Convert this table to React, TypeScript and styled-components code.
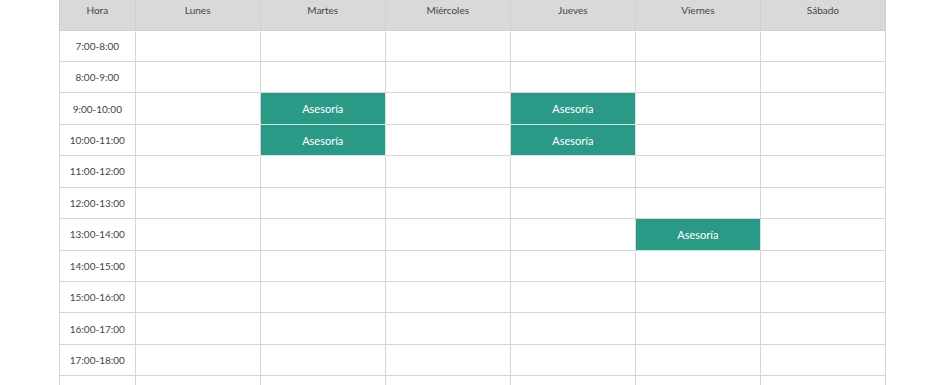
import React from 'react';
import styled, { createGlobalStyle } from 'styled-components';

const GlobalStyle = createGlobalStyle`
    html, body {
        margin: 0;
        padding: 0;
        background: #ffffff;
    }
    body {
        font-family: Lato, "Open Sans", sans-serif;
    }
`

const Page = styled.div`
    padding-left: 59px;
    width: 945px;
    height: 385px;
    overflow: hidden;
    box-sizing: border-box;
`

const Table = styled.table`
    border-collapse: collapse;
    table-layout: fixed;
    width: 827px;
    font-size: 10px;
    color: #444444;
`

const HeadCell = styled.th<{ $first?: boolean }>`
    width: ${(p) => (p.$first ? '75px' : '124px')};
    height: 30px;
    padding: 4px 0 0;
    box-sizing: border-box;
    background-color: #d9d9d9;
    border: 1px solid #d0d0d0;
    border-top: none;
    font-weight: 400;
    line-height: 12px;
    text-align: center;
    vertical-align: top;
`

const Row = styled.tr`
    height: 31.45px;
`

const Cell = styled.td<{ $busy?: boolean }>`
    padding: 0;
    border: 1px solid #d6d6d6;
    text-align: center;
    vertical-align: middle;
    background-color: ${(p) => (p.$busy ? '#2a9a87' : '#ffffff')};
    color: ${(p) => (p.$busy ? '#ffffff' : '#444444')};
    font-size: ${(p) => (p.$busy ? '11px' : '10px')};
    border-color: ${(p) => (p.$busy ? '#cfe6e1' : '#d6d6d6')};
`

const days = ['Lunes', 'Martes', 'Miércoles', 'Jueves', 'Viernes', 'Sábado'];

const hours = [
    '7:00-8:00',
    '8:00-9:00',
    '9:00-10:00',
    '10:00-11:00',
    '11:00-12:00',
    '12:00-13:00',
    '13:00-14:00',
    '14:00-15:00',
    '15:00-16:00',
    '16:00-17:00',
    '17:00-18:00',
    '18:00-19:00',
];

// hour index -> day indexes with an "Asesoría"
const busy: Record<number, number[]> = {
    2: [1, 3],
    3: [1, 3],
    6: [4],
};

const App: React.FC = () => {
    return (
        <Page>
            <GlobalStyle />
            <Table>
                <thead>
                    <tr>
                        <HeadCell $first>Hora</HeadCell>
                        {days.map((d) => (
                            <HeadCell key={d}>{d}</HeadCell>
                        ))}
                    </tr>
                </thead>
                <tbody>
                    {hours.map((h, i) => (
                        <Row key={h}>
                            <Cell>{h}</Cell>
                            {days.map((d, j) => {
                                const isBusy = (busy[i] || []).includes(j);
                                return (
                                    <Cell key={d} $busy={isBusy}>
                                        {isBusy ? 'Asesoría' : ''}
                                    </Cell>
                                );
                            })}
                        </Row>
                    ))}
                </tbody>
            </Table>
        </Page>
    );
};

export default App;
